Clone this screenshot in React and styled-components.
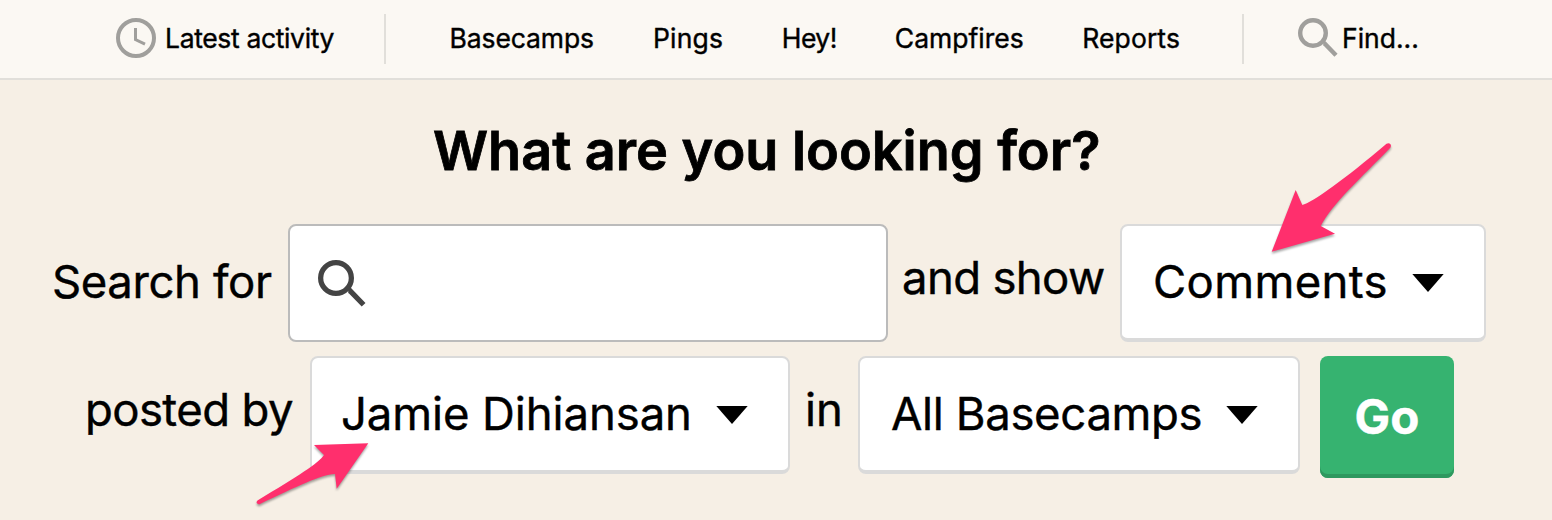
import React from 'react';
import styled, { createGlobalStyle } from 'styled-components';

const links = [
  { name: 'Basecamps', left: 63.5, spacing: -0.1 },
  { name: 'Pings', left: 59, spacing: 0.2 },
  { name: 'Hey!', left: 58.5, spacing: -0.5 },
  { name: 'Campfires', left: 58, spacing: 0 },
  { name: 'Reports', left: 58.5, spacing: 0.1 },
];

const Clock = () => (
  <svg width="40" height="40" viewBox="0 0 40 40" fill="none" stroke="#a09f9c">
    <circle cx="20" cy="20" r="18" strokeWidth="4" />
    <path d="M19.5 10v11.6l9.5 4.6" strokeWidth="3" />
  </svg>
);

const Magnifier = ({ size, color }) => (
  <svg width={size} height={size} viewBox="0 0 40 40" fill="none" stroke={color}>
    <circle cx="15" cy="15" r="12.8" strokeWidth="4.4" />
    <path d="M25.2 25.5h1.4L38 37.3" strokeWidth="4.4" />
  </svg>
);

const Dropdown = ({ width, left, spacing, children }) => (
  <Select $width={width} $left={left}>
    <Value $spacing={spacing}>{children}</Value>
    <svg width="32" height="18" viewBox="0 0 32 18">
      <path d="M0.3 0h31.4L16 18z" fill="#000" />
    </svg>
  </Select>
);

const App = () => {
  return (
    <Page>
      <GlobalStyle />
      <Nav>
        <Activity>
          <Clock />
          <NavText $spacing={-0.35}>Latest activity</NavText>
        </Activity>
        <Links>
          {links.map((link) => (
            <Link key={link.name} $left={link.left} $spacing={link.spacing}>{link.name}</Link>
          ))}
        </Links>
        <Find>
          <Magnifier size={40} color="#a09f9c" />
          <NavText>Find...</NavText>
        </Find>
      </Nav>

      <Heading>What are you looking for?</Heading>

      <Row $left={52}>
        <Label $width={236} $spacing={-0.4} $lift={1}>Search for</Label>
        <SearchBox>
          <Magnifier size={48} color="#444" />
        </SearchBox>
        <Label $width={232} $left={14} $spacing={-0.65} $lift={5}>and show</Label>
        <Dropdown width={366} left={31} spacing={0.35}>Comments</Dropdown>
      </Row>
      <Row $left={85}>
        <Label $width={225} $spacing={-0.6} $lift={5}>posted by</Label>
        <Dropdown width={480} left={29} spacing={-0.1}>Jamie Dihiansan</Dropdown>
        <Label $width={68} $left={15} $lift={5}>in</Label>
        <Dropdown width={442} left={31} spacing={-0.35}>All Basecamps</Dropdown>
        <Go>Go</Go>
      </Row>

      <Arrows width="1552" height="520" viewBox="0 0 1552 520">
        <path d="M1271.7 251.7L1295.7 190L1302.3 205C1312 203 1345 179 1386.5 143.8C1389.5 142 1392 144.5 1390.5 147.5C1361 178 1333 203 1320.7 226L1335 233.7Z" />
        <path d="M368.3 443.3L314 445L324 455C319 463 298 476 257.5 500.5C255.5 502.5 257 504.5 259.5 504.2C298 486 320 475 335 474L336.7 488.7Z" />
      </Arrows>
    </Page>
  );
};

export default App;

const GlobalStyle = createGlobalStyle`
  body {
    margin: 0;
    background: #f6efe5;
  }
`;

const Page = styled.div`
  position: relative;
  box-sizing: border-box;
  width: 1552px;
  height: 520px;
  overflow: hidden;
  background: #f6efe5;
  color: #000;
  font-family: Inter, "Liberation Sans", sans-serif;
  -webkit-text-stroke: 0.4px;
`;

const Nav = styled.nav`
  box-sizing: border-box;
  display: flex;
  align-items: flex-start;
  height: 80px;
  padding: 14px 0 0 116px;
  border-bottom: 2px solid #e1dfda;
  background: #fbf8f3;
`;

const NavText = styled.span`
  font-size: 26.5px;
  line-height: 50px;
  letter-spacing: ${(props) => props.$spacing || 0}px;
  white-space: nowrap;
`;

const Activity = styled.div`
  box-sizing: border-box;
  display: flex;
  align-items: center;
  gap: 9px;
  width: 268px;
  height: 48px;
`;

const Links = styled.div`
  box-sizing: border-box;
  display: flex;
  width: 860px;
  height: 50px;
  border: solid #e1dfda;
  border-width: 0 2px;
`;

const Link = styled.span`
  margin-left: ${(props) => props.$left}px;
  font-size: 26.5px;
  line-height: 49px;
  letter-spacing: ${(props) => props.$spacing}px;
`;

const Find = styled.div`
  display: flex;
  align-items: center;
  gap: 4px;
  height: 48px;
  padding-left: 54px;
`;

const Heading = styled.h1`
  margin: 0;
  padding: 38px 0 0 433px;
  height: 106px;
  font-size: 54px;
  line-height: 66px;
  font-weight: 600;
  -webkit-text-stroke: 0.8px;
`;

const Row = styled.div`
  display: flex;
  align-items: flex-start;
  height: 118px;
  margin-bottom: 14px;
  padding-left: ${(props) => props.$left}px;
`;

const Label = styled.span`
  box-sizing: border-box;
  flex: none;
  width: ${(props) => props.$width}px;
  padding-left: ${(props) => props.$left || 0}px;
  font-size: 45.5px;
  line-height: ${(props) => 118 - props.$lift * 2}px;
  letter-spacing: ${(props) => props.$spacing || 0}px;
  white-space: nowrap;
`;

const SearchBox = styled.div`
  box-sizing: border-box;
  display: flex;
  align-items: center;
  width: 600px;
  height: 118px;
  padding: 2px 0 0 28px;
  border: 2px solid #bbb;
  border-radius: 8px;
  background: #fff;
`;

const Select = styled.div`
  box-sizing: border-box;
  display: flex;
  flex: none;
  align-items: center;
  justify-content: space-between;
  width: ${(props) => props.$width}px;
  height: 118px;
  padding: 0 40px 0 ${(props) => props.$left}px;
  border: 2px solid #dadada;
  border-bottom-width: 4px;
  border-radius: 8px;
  background: #fff;

  svg {
    margin-top: 2px;
  }
`;

const Value = styled.span`
  font-size: 45.5px;
  line-height: 112px;
  letter-spacing: ${(props) => props.$spacing || 0}px;
  white-space: nowrap;
`;

const Go = styled.button`
  box-sizing: border-box;
  width: 134px;
  height: 122px;
  margin: 0 0 0 20px;
  padding: 0;
  border: 0;
  border-radius: 8px;
  background: #36b370;
  box-shadow: inset 0 -4px #2e985f;
  color: #fff;
  font: bold 47.5px/118px Inter, "Liberation Sans", sans-serif;
`;

const Arrows = styled.svg`
  position: absolute;
  top: 0;
  left: 0;
  fill: #ff2f6d;
  filter: drop-shadow(0 2px 1px rgba(0, 0, 0, 0.35));
  pointer-events: none;
`;
